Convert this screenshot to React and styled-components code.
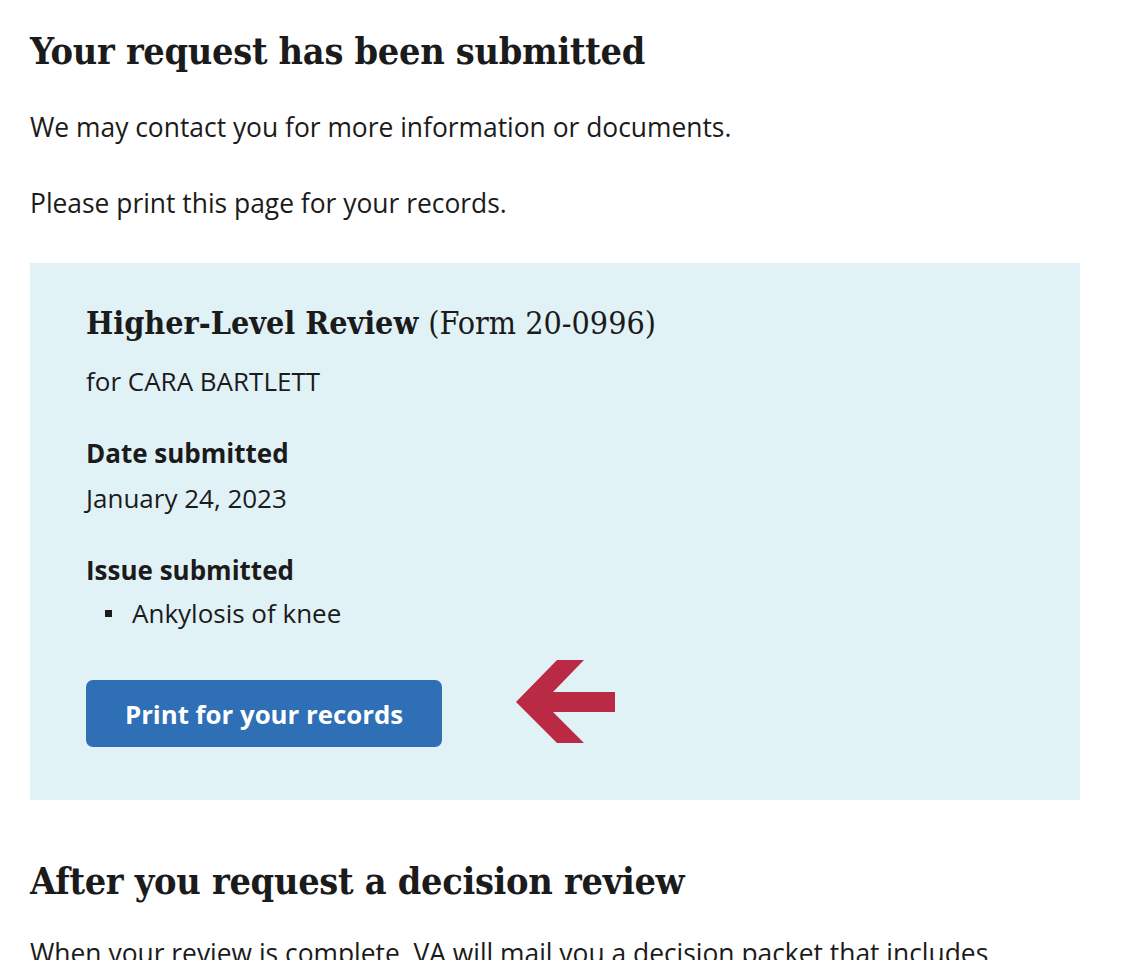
import React from "react";
import styled, { createGlobalStyle } from "styled-components";

const GlobalStyle = createGlobalStyle`
  html, body { margin: 0; padding: 0; background: #ffffff; }
  body {
    font-family: "Open Sans", "Noto Sans", sans-serif;
    color: #1b1b1b;
    -webkit-font-smoothing: antialiased;
  }
  * { box-sizing: border-box; }
`;

const Page = styled.main`
  width: 1050px;
  margin-left: 30px;
  padding-top: 27px;
`;

const Heading = styled.h1`
  margin: 0 0 ${(p) => p.$after || 0}px;
  font-family: "DejaVu Serif", serif;
  font-stretch: condensed;
  font-weight: 700;
  font-size: 37.5px;
  line-height: 48px;
  letter-spacing: -0.3px;
  white-space: nowrap;
`;

const Para = styled.p`
  margin: 0 0 ${(p) => p.$after || 0}px;
  font-size: 26.4px;
  line-height: 38px;
  white-space: nowrap;
`;

const Card = styled.section`
  background: #e1f2f7;
  padding: 40px 56px 53px;
  margin: 0 0 57px;
`;

const CardTitle = styled.h2`
  margin: 0 0 19px;
  font-family: "DejaVu Serif", serif;
  font-stretch: condensed;
  font-size: 32px;
  line-height: 40px;
  font-weight: 700;
  white-space: nowrap;
  span {
    font-weight: 400;
  }
`;

const Label = styled.h3`
  margin: 0;
  font-size: 26px;
  line-height: 38px;
  font-weight: 700;
`;

const Value = styled.p`
  margin: ${(p) => p.$before || 0}px 0 ${(p) => p.$after || 0}px;
  font-size: 26px;
  line-height: 38px;
`;

const List = styled.ul`
  margin: 5px 0 48px;
  padding: 0;
  list-style: none;
`;

const Item = styled.li`
  display: flex;
  align-items: center;
  font-size: 26px;
  line-height: 38px;
  &::before {
    content: "";
    width: 7px;
    height: 7px;
    background: #1b1b1b;
    margin-left: 19px;
    margin-right: 20px;
    flex: none;
  }
`;

const ActionRow = styled.div`
  display: flex;
  align-items: flex-start;
  gap: 74px;
`;

const Button = styled.button`
  height: 67px;
  width: 356px;
  border: none;
  border-radius: 7px;
  background: #2e6fb6;
  color: #ffffff;
  font-family: "Open Sans", "Noto Sans", sans-serif;
  font-weight: 700;
  font-size: 25.8px;
  cursor: pointer;
`;

const ArrowSvg = styled.svg`
  flex: none;
  margin-top: -20px;
`;

const Arrow = () => (
  <ArrowSvg width="100" height="84" viewBox="515 660 100 84" aria-hidden="true">
    <polygon
      fill="#bb2a44"
      points="515,702 556,660 583,660 552,692 614,692 614,712 552,712 583,743 556,743"
    />
  </ArrowSvg>
);

export default function App() {
  return (
    <>
      <GlobalStyle />
      <Page>
        <Heading $after={33}>Your request has been submitted</Heading>
        <Para $after={38}>We may contact you for more information or documents.</Para>
        <Para $after={41}>Please print this page for your records.</Para>
        <Card>
          <CardTitle>
            Higher-Level Review <span>(Form 20-0996)</span>
          </CardTitle>
          <Value $after={34}>for CARA BARTLETT</Value>
          <Label>Date submitted</Label>
          <Value $before={7} $after={34}>January 24, 2023</Value>
          <Label>Issue submitted</Label>
          <List>
            <Item>Ankylosis of knee</Item>
          </List>
          <ActionRow>
            <Button type="button">Print for your records</Button>
            <Arrow />
          </ActionRow>
        </Card>
        <Heading as="h2" $after={29}>After you request a decision review</Heading>
        <Para>When your review is complete, VA will mail you a decision packet that includes</Para>
      </Page>
    </>
  );
}
